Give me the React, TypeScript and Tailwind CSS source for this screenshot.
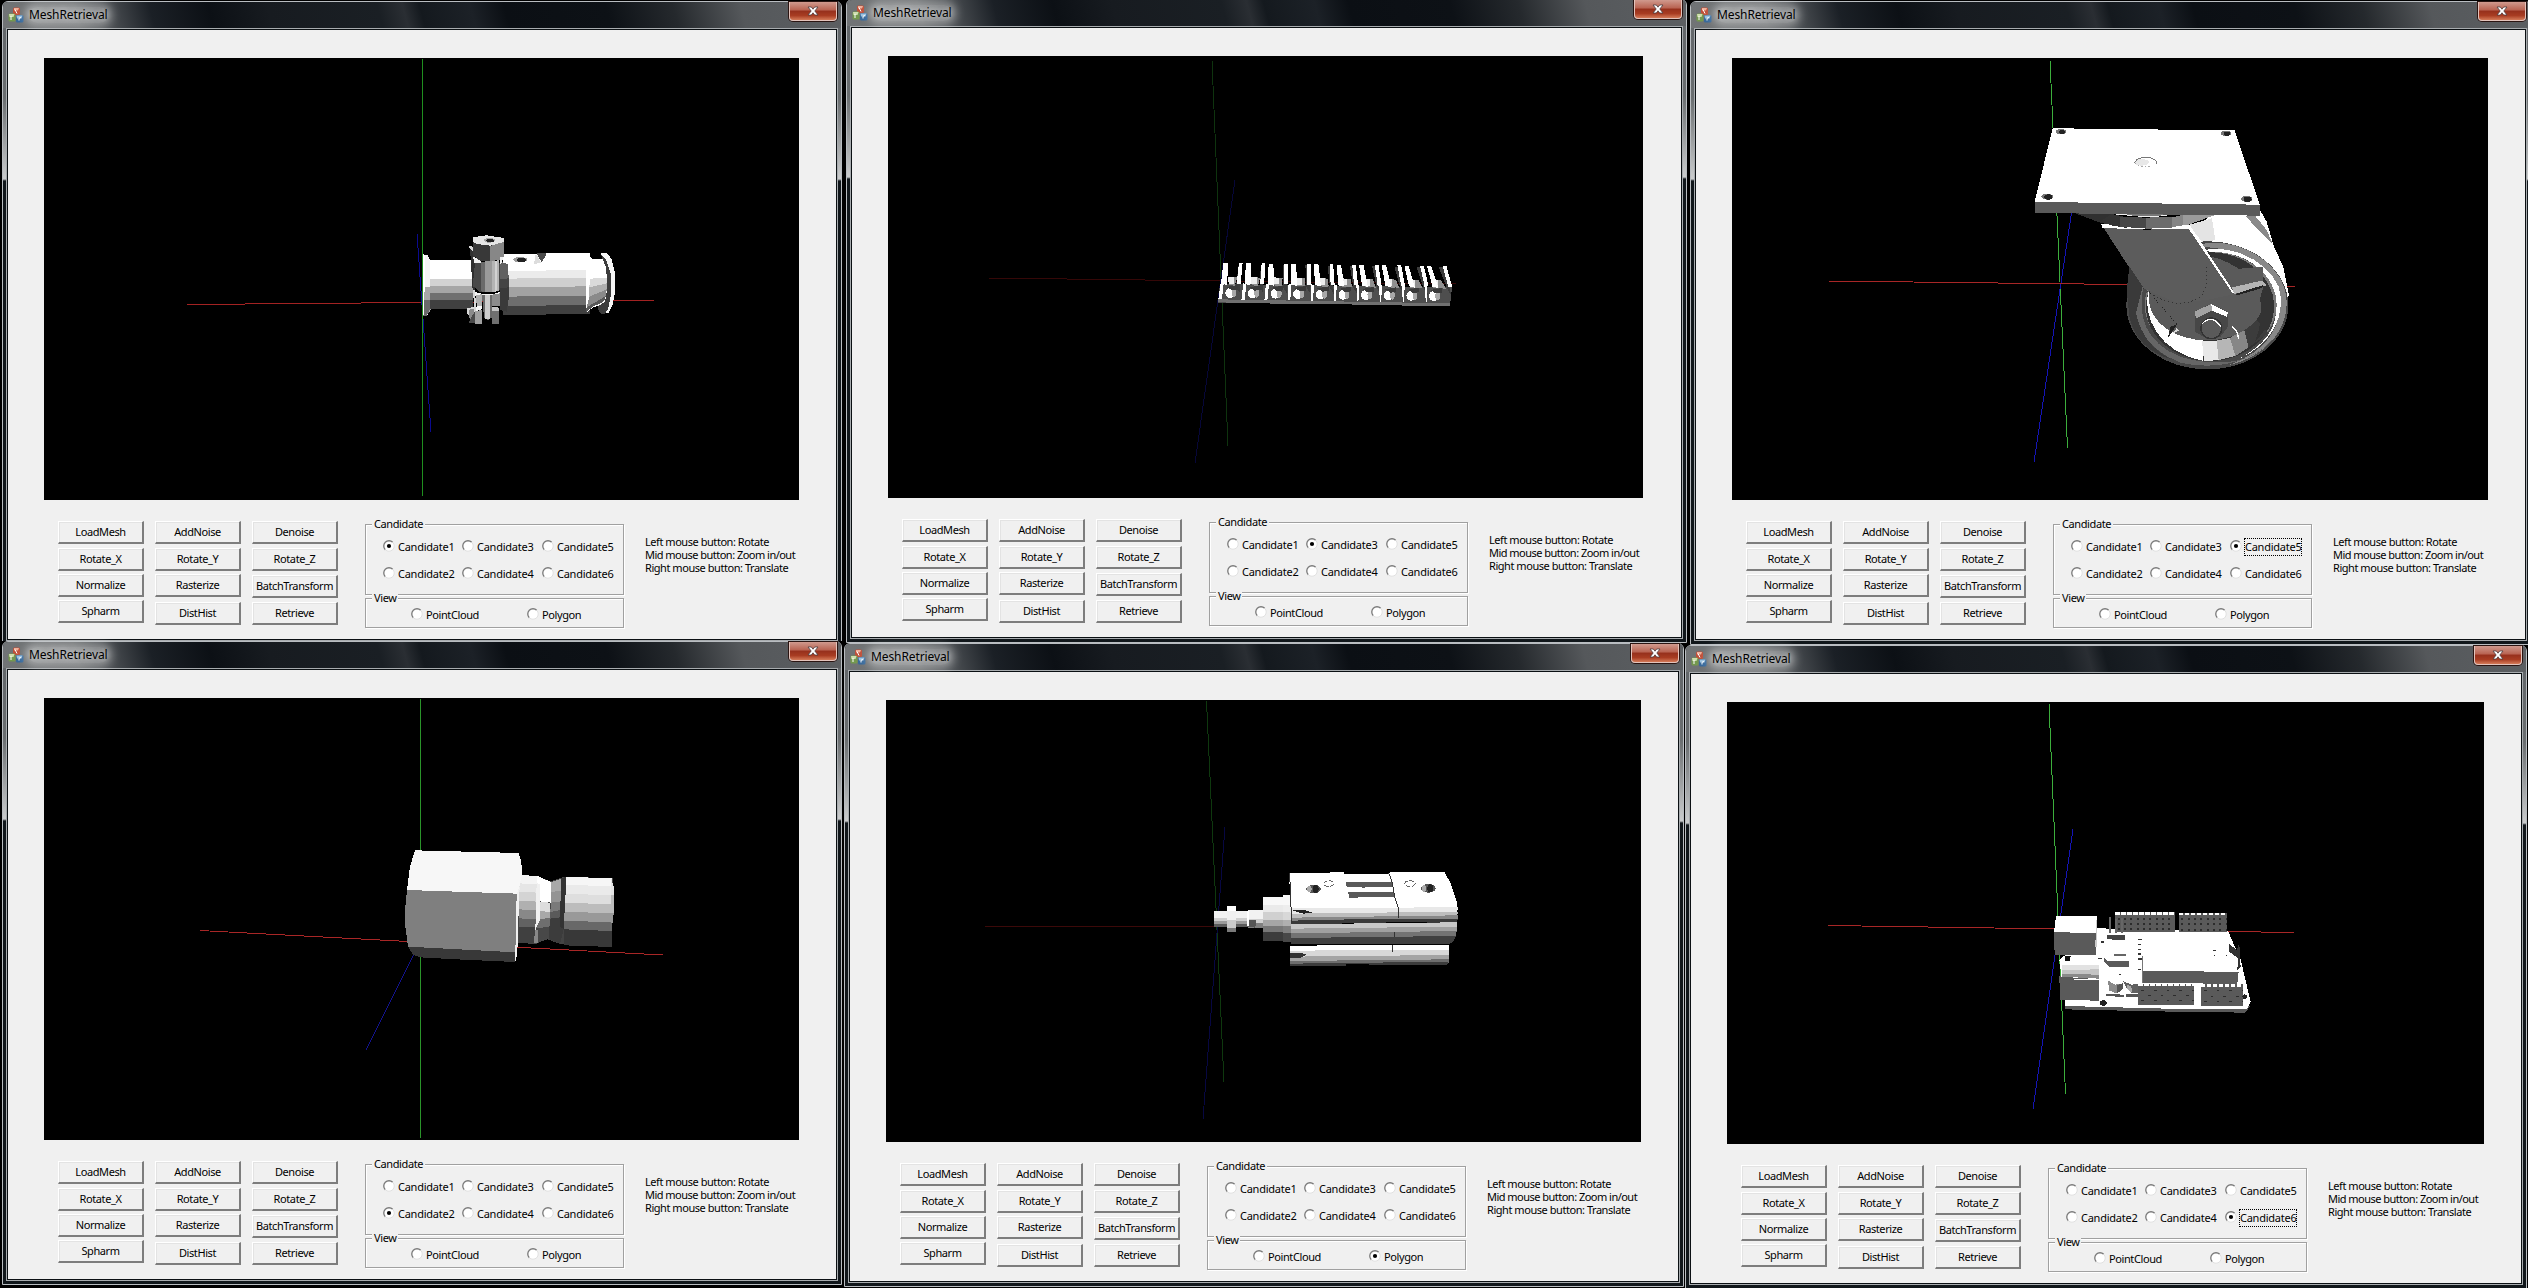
import React from 'react';

type Poly = [string, string];

const Shapes = ({ list }: { list: Poly[] }) => (
  <>
    {list.map(([points, fill], i) => (
      <polygon key={i} points={points} fill={fill} />
    ))}
  </>
);

/** Horizontal shaded strips approximating a faceted cylinder. */
const Bands = ({ x, w, ys, colors, slope = 0 }: { x: number; w: number; ys: number[]; colors: string[]; slope?: number }) => (
  <>
    {colors.map((c, i) => (
      <polygon
        key={i}
        points={`${x},${ys[i]} ${x + w},${ys[i] + slope} ${x + w},${ys[i + 1] + slope} ${x},${ys[i + 1]}`}
        fill={c}
      />
    ))}
  </>
);

const Axis = ({ a, b, color }: { a: [number, number]; b: [number, number]; color: string }) => (
  <line x1={a[0]} y1={a[1]} x2={b[0]} y2={b[1]} stroke={color} strokeWidth={1} />
);

const Coupling = () => (
  <>
    <Axis a={[187, 304.5]} b={[654, 300.5]} color="#a32222" />
    <Axis a={[417, 234]} b={[431, 432]} color="#0a0a90" />
    <g transform="translate(360 200) scale(0.33333)">
      <Shapes
        list={[
          ['190,163 203,165 210,182 216,200 216,310 210,335 200,347 190,347', '#f4f4f4'],
          ['190,262 214,262 212,330 200,347 190,347', '#a8a8a8'],
          ['190,300 212,300 208,335 200,347 190,347', '#6a6a6a'],
        ]}
      />
      <Bands x={210} w={130} ys={[181, 237, 259, 280, 300, 326]} colors={['#ffffff', '#d2d2d2', '#a6a6a6', '#707070', '#404040']} />
      <Shapes list={[['190,163 196,167 192,345 188,345', '#ffffff']]} />
      <Bands x={430} w={260} ys={[162, 213, 236, 262, 290, 318, 345]} colors={['#ffffff', '#ebebeb', '#cfcfcf', '#a2a2a2', '#6e6e6e', '#404040']} slope={-3} />
      <Shapes
        list={[
          ['550,160 670,159 690,172 690,200 550,200', '#ffffff'],
          ['680,165 700,178 735,178 742,210 742,290 730,312 700,322 678,338', '#ffffff'],
          ['690,236 741,233 741,250 688,262', '#dadada'],
          ['688,262 741,250 740,268 688,290', '#b0b0b0'],
          ['688,290 740,268 738,292 680,322', '#8a8a8a'],
          ['680,322 738,288 735,306 700,318 678,338', '#585858'],
          ['722,160 740,158 755,178 765,220 766,270 758,315 745,340 722,341 712,318 735,300 742,260 740,200', '#f6f6f6'],
          ['722,162 738,178 752,220 754,280 745,325 735,342 720,340 712,320 735,305 741,270 739,205', '#3c3c3c'],
          ['530,160 558,160 556,172 544,186', '#4a4a4a'],
          ['527,164 535,172 544,190 522,191', '#dddddd'],
          ['420,185 444,192 447,262 447,290 440,335 420,330', '#3a3a3a'],
          ['420,185 444,192 446,235 420,238', '#606060'],
          ['420,238 446,235 446,262 420,265', '#444444'],
          ['328,138 338,140 345,185 340,200 345,280 350,330 340,370 322,340 322,325 342,320 335,200', '#d8d8d8'],
          ['330,145 345,160 345,270 338,270', '#303030'],
          ['326,330 340,326 345,345 340,370 326,350', '#8a8a8a'],
          ['338,112 380,106 431,114 431,170 390,184 360,184 338,165', '#383838'],
          ['338,112 380,106 431,114 431,126 392,137 350,132 338,124', '#e6e6e6'],
          ['390,138 431,126 431,170 420,180 390,183', '#878787'],
          ['338,168 365,185 365,195 420,188 420,172 431,170 424,192 345,196', '#f0f0f0'],
          ['345,190 420,190 420,270 400,276 360,276 338,258', '#484848'],
          ['364,186 376,186 376,276 364,274', '#6a6a6a'],
          ['376,184 396,184 396,276 376,276', '#9a9a9a'],
          ['396,184 418,180 418,272 396,276', '#b4b4b4'],
          ['404,184 412,183 412,274 404,275', '#d2d2d2'],
          ['345,276 370,282 400,282 420,276 420,290 345,288', '#f4f4f4'],
          ['348,285 366,283 366,318 350,318', '#b0b0b0'],
          ['396,284 420,280 420,318 396,318', '#8c8c8c'],
          ['350,318 366,318 366,328 347,334', '#f6f6f6'],
          ['344,334 366,330 366,371 326,368', '#4a4a4a'],
          ['346,334 366,330 366,371 346,371', '#a0a0a0'],
          ['396,320 414,320 418,330 418,371 396,371', '#c4c4c4'],
          ['396,334 418,334 418,371 396,371', '#707070'],
          ['366,284 396,284 396,352 384,360 372,354', '#6a6a6a'],
          ['376,286 390,286 390,356 376,358', '#cccccc'],
        ]}
      />
      <ellipse cx="388" cy="121" rx="17" ry="7" fill="#aaa" />
      <ellipse cx="391" cy="122" rx="12" ry="5" fill="#222" />
      <ellipse cx="481" cy="179" rx="21" ry="8" fill="#9b9b9b" />
      <ellipse cx="485" cy="180" rx="15" ry="6" fill="#222" />
    </g>
    <Axis a={[422.5, 59]} b={[422.5, 496]} color="#1f8f1f" />
  </>
);

const Terminal = () => (
  <>
    <Axis a={[1212, 61]} b={[1228, 446]} color="#0e330e" />
    <Axis a={[988, 278]} b={[1456, 284]} color="#350707" />
    <Axis a={[1235, 180]} b={[1195, 463]} color="#060638" />
    <g transform="translate(1180 230) scale(0.33333)">
      <Shapes
        list={[
          ['120,162 816,172 810,226 114,218', '#4e4e4e'],
          ['114,208 810,220 810,227 690,227 490,223 290,221 114,217', '#707070'],
        ]}
      />
      {Array.from({ length: 10 }, (_, i) => {
        const x = 130 + 67.9 * i;
        const y = 99 + i;
        const lean = -6 + 2.6 * i;
        return (
          <g key={i}>
            <polygon points={`${x + 15},${y + 41} ${x + 42},${y + 43} ${x + 40 + lean},${y + 68} ${x + 18},${y + 66}`} fill="#8f8f8f" />
            <polygon points={`${x + 14},${y + 41} ${x + 32},${y + 42} ${x + 32},${y + 62} ${x + 16},${y + 62}`} fill="#ededed" />
            <polygon points={`${x + 46 - i * 1.2},${y + 4} ${x + 52},${y + 4} ${x + 56 + lean},${y + 90} ${x + 44 + lean},${y + 70}`} fill="#3c3c3c" />
            <polygon points={`${x},${y} ${x + 15 - i * 0.3},${y} ${x + 17 + lean},${y + 66} ${x - 1 + lean},${y + 62}`} fill="#ffffff" />
            <polygon points={`${x + 47},${y} ${x + 58},${y} ${x + 58 + lean},${y + 62} ${x + 46 + lean},${y + 62}`} fill="#ffffff" />
            <polygon points={`${x - 8},${y + 60} ${x + 1},${y + 62} ${x - 4 + i * 0.3},${y + 109} ${x - 15 + i * 1.3},${y + 109}`} fill="#ffffff" />
            <ellipse cx={x + 20} cy={y + 90} rx="14" ry="15" fill="#ffffff" />
            <ellipse cx={x + 32} cy={y + 89} rx="7" ry="14" fill="#a8a8a8" />
            <polygon points={`${x + 10},${y + 72} ${x + 44},${y + 66} ${x + 44},${y + 80} ${x + 26},${y + 82}`} fill="#3a3a3a" />
          </g>
        );
      })}
    </g>
  </>
);

const Caster = () => (
  <>
    <Axis a={[2050, 61]} b={[2067.5, 448]} color="#3cae3c" />
    <Axis a={[2073, 203]} b={[2034, 462]} color="#1414b4" />
    <Axis a={[1828, 281]} b={[2295, 286.5]} color="#a82626" />
    <g transform="translate(2000 100) scale(0.33333)">
      <Shapes
        list={[
          ['640,342 780,330 800,365 822,440 850,500 866,580 862,650 840,700 700,560 560,400', '#ffffff'],
          ['566,375 636,355 646,420 610,430', '#e4e4e4'],
          ['735,347 765,347 800,390 818,432 790,405', '#8a8a8a'],
        ]}
      />
      <ellipse cx="622" cy="616" rx="243" ry="192" fill="#484848" />
      <path d="M606,432 C700,412 820,470 852,560 C880,640 840,760 680,798 L700,790 C800,750 845,680 838,600 C825,520 760,450 606,440Z" fill="#888" />
      <path d="M612,450 C700,435 800,480 836,560 C860,640 820,730 720,775 C800,730 836,680 828,600 C800,500 740,455 612,454Z" fill="#fff" />
      <path d="M408,560 C380,640 420,740 540,788 C660,815 780,780 830,700 C770,800 640,800 540,770 C440,730 410,650 430,560Z" fill="#666" />
      <ellipse cx="632" cy="615" rx="198" ry="160" fill="#7a7a7a" />
      <ellipse cx="630" cy="620" rx="192" ry="163" fill="#333" />
      <path d="M445,572 C425,650 480,760 610,783 L612,722 C520,700 450,640 445,572Z" fill="#fff" />
      <Shapes
        list={[
          ['606,722 650,722 656,780 612,784', '#e8e8e8'],
          ['650,722 690,714 706,768 656,780', '#b6b6b6'],
          ['690,714 732,688 746,742 706,768', '#878787'],
          ['732,688 765,655 805,700 746,742', '#3c3c3c'],
        ]}
      />
      <ellipse cx="620" cy="596" rx="173" ry="125" fill="#5a5a5a" />
      <path d="M640,470 C740,470 805,530 820,590 C825,640 800,690 765,725 C805,620 790,520 640,470Z" fill="#333" />
      <Shapes
        list={[
          ['440,530 790,500 790,560 770,630 700,700 520,690 460,620', '#5a5a5a'],
          ['696,562 785,542 800,556 702,582', '#b4b4b4'],
          ['706,582 790,555 786,564 712,586', '#222222'],
          ['304,373 440,390 568,376 700,583 620,600 530,608 430,565 386,500', '#5c5c5c'],
          ['304,372 570,376 704,580 696,577 567,388 306,385', '#ffffff'],
          ['220,338 334,340 360,380 300,368', '#303030'],
          ['334,342 382,352 382,384 334,376 300,365', '#333333'],
          ['360,350 440,353 440,386 360,380', '#484848'],
          ['438,353 516,350 516,384 438,386', '#6c6c6c'],
          ['516,352 548,345 548,376 516,382', '#858585'],
          ['548,345 645,345 565,374 548,376', '#9b9b9b'],
          ['330,342 440,352 500,348 500,342', '#eeeeee'],
          ['372,342 500,342 480,347 400,347', '#777777'],
          ['104,306 779,313 779,347 106,339', '#5a5a5a'],
          ['158,84 240,86 704,91 779,314 104,306', '#ffffff'],
          ['584,634 632,612 682,634 684,680 660,712 620,716 584,695', '#474747'],
          ['584,634 634,612 636,632 588,656', '#a2a2a2'],
          ['634,612 684,638 680,650 636,632', '#ffffff'],
          ['504,712 512,680 532,672 514,700', '#222222'],
          ['514,702 530,685 536,692', '#d8d8d8'],
        ]}
      />
      <path d="M388,500 L428,560 L408,640 Q430,740 520,780 Q410,750 388,650 L380,570Z" fill="#3a3a3a" />
      <circle cx="634" cy="685" r="31" fill="#5a5a5a" stroke="#333" strokeWidth="4" />
      <path d="M606,672 Q634,640 662,680 M696,680 Q712,690 716,716" fill="none" stroke="#fff" strokeWidth="4" />
      <path d="M430,565 Q530,640 600,590 Q625,570 620,500" fill="none" stroke="#333" strokeWidth="3" strokeDasharray="4 8" />
      <path d="M450,580 L530,672" fill="none" stroke="#222" strokeWidth="3" strokeDasharray="3 6" />
      {[[183, 95, 15], [678, 100, 15], [142, 290, 18], [740, 297, 18]].map(([x, y, r]) => (
        <g key={x}>
          <ellipse cx={x} cy={y} rx={r} ry={r / 2} fill="#777" />
          <ellipse cx={x + 3} cy={y + 1} rx={r - 6} ry={r / 2 - 1} fill="#222" />
        </g>
      ))}
      <ellipse cx="425" cy="187" rx="22" ry="10" fill="#e8e8e8" />
      <path d="M403,188 Q412,170 445,172 Q475,178 468,192" fill="none" stroke="#777" strokeWidth="3" />
      <path d="M404,190 Q420,204 455,199" fill="none" stroke="#aaa" strokeWidth="3" strokeDasharray="5 6" />
    </g>
  </>
);

const Fitting = () => (
  <>
    <Axis a={[200, 930.5]} b={[663, 955]} color="#a82626" />
    <Axis a={[415, 952]} b={[366, 1050]} color="#12128c" />
    <Axis a={[420.5, 699]} b={[420.5, 1138]} color="#2a942a" />
    <g transform="translate(360 820) scale(0.33333)">
      <Shapes list={[['472,165 532,168 570,184 613,170 758,175 762,260 750,381 600,372 560,357 523,372 472,368', '#444444']]} />
      <Bands x={478} w={54} ys={[165, 190, 215, 242, 268, 295, 320, 368]} colors={['#f4f4f4', '#e6e6e6', '#d4d4d4', '#b0b0b0', '#888888', '#626262', '#404040']} slope={3} />
      <Bands x={612} w={143} ys={[170, 194, 221, 248, 275, 302, 328, 376]} colors={['#f6f6f6', '#eaeaea', '#dedede', '#bcbcbc', '#999999', '#686868', '#383838']} slope={5} />
      <Shapes
        list={[
          ['754,175 761,200 762,226 754,226', '#e4e4e4'],
          ['754,226 762,226 761,280 754,280', '#bcbcbc'],
          ['754,280 761,280 758,308 754,308', '#999999'],
          ['532,168 573,186 573,248 540,244 530,250', '#ffffff'],
          ['530,245 570,248 570,276 528,272', '#dddddd'],
          ['528,272 570,276 570,296 528,298', '#a8a8a8'],
          ['528,298 570,294 570,320 526,325', '#6e6e6e'],
          ['526,325 570,320 566,357 523,372', '#484848'],
          ['524,330 535,330 533,368 523,370', '#888888'],
          ['530,190 540,192 540,300 526,330', '#f0f0f0'],
          ['573,186 606,176 603,212 573,216', '#a8a8a8'],
          ['573,216 603,212 603,244 573,248', '#949494'],
          ['573,248 603,244 602,270 571,276', '#7a7a7a'],
          ['571,276 602,270 602,292 570,296', '#5a5a5a'],
          ['570,296 602,292 612,325 600,372 566,357', '#3c3c3c'],
          ['603,176 617,171 617,215 611,327 600,320', '#333333'],
          ['165,91 400,97 475,99 484,125 486,165 478,200 472,222 141,211 150,140', '#f7f7f7'],
          ['141,210 472,221 474,300 468,397 144,380 136,320 136,260', '#7f7f7f'],
          ['144,380 468,397 466,426 290,418 180,412 160,405', '#383838'],
          ['470,222 479,200 474,330 472,400 466,426 466,400', '#f0f0f0'],
        ]}
      />
    </g>
  </>
);

const Cylinder = () => (
  <>
    <Axis a={[1206.5, 701]} b={[1224, 1082]} color="#0e380e" />
    <Axis a={[985, 927]} b={[1216, 926.5]} color="#3c0909" />
    <Axis a={[1225, 827]} b={[1203, 1119]} color="#070742" />
    <g transform="translate(1180 840) scale(0.33333)">
      <Bands x={103} w={102} ys={[213, 234, 244, 252, 260]} colors={['#f2f2f2', '#cfcfcf', '#9a9a9a', '#5c5c5c']} />
      <Bands x={141} w={26} ys={[198, 214, 240, 264, 277]} colors={['#ffffff', '#f0f0f0', '#cacaca', '#7a7a7a']} />
      <Bands x={204} w={45} ys={[210, 236, 248, 263]} colors={['#f2f2f2', '#d0d0d0', '#808080']} />
      <Shapes list={[['204,240 228,240 226,263 204,261', '#555555'], ['200,213 207,213 207,258 200,258', '#ffffff']]} />
      <Bands x={249} w={84} ys={[171, 194, 217, 240, 259, 277, 303]} colors={['#f8f8f8', '#eaeaea', '#d0d0d0', '#a6a6a6', '#777777', '#3c3c3c']} />
      <Bands x={308} w={26} ys={[165, 194, 217, 240, 259, 279, 306]} colors={['#f8f8f8', '#ededed', '#d8d8d8', '#b0b0b0', '#808080', '#484848']} />
      <Shapes
        list={[
          ['328,99 492,97 492,101 626,101 630,96 794,97 812,130 832,190 833,210 330,214', '#ffffff'],
          ['330,204 833,202 832,216 332,222', '#e8e8e8'],
          ['332,221 833,215 832,228 333,234', '#bdbdbd'],
          ['333,233 833,226 833,238 333,244', '#888888'],
          ['333,242 610,236 833,236 831,248 640,247 333,254', '#3a3a3a'],
          ['333,253 640,249 831,247 831,262 333,268', '#c8c8c8'],
          ['333,266 831,260 830,275 333,281', '#a0a0a0'],
          ['333,280 830,273 826,290 333,295', '#737373'],
          ['333,294 828,288 820,305 806,312 333,313', '#404040'],
          ['330,318 500,315 640,315 806,315 806,336 330,340', '#ffffff'],
          ['330,332 806,329 806,348 330,352', '#d8d8d8'],
          ['330,350 806,345 806,360 500,362 330,366', '#a4a4a4'],
          ['330,364 500,361 806,358 806,368 500,373 330,373', '#6e6e6e'],
          ['330,371 498,369 806,365 800,375 630,375 498,372 498,378 330,378', '#3c3c3c'],
          ['330,338 362,338 380,344 362,353 330,353', '#333333'],
          ['333,210 375,210 396,218 370,221', '#222222'],
          ['498,126 638,126 638,140 554,140 554,143 500,140', '#5a5a5a'],
          ['504,156 642,156 645,171 535,171 535,174 508,173', '#5a5a5a'],
        ]}
      />
      <path d="M626,98 L636,125 L644,170 L656,208 L655,235 M643,275 V290 M637,315 V335 M329,100 L335,250" fill="none" stroke="#333" strokeWidth="3" />
      {[[401, 147], [745, 145]].map(([x, y]) => (
        <g key={x}>
          <ellipse cx={x} cy={y} rx="22" ry="13" fill="#555" />
          <ellipse cx={x + 6} cy={y} rx="9" ry="12" fill="#222" />
          <ellipse cx={x - 13} cy={y} rx="7" ry="10" fill="#aaa" />
        </g>
      ))}
      <ellipse cx="446" cy="131" rx="15" ry="9" fill="none" stroke="#666" strokeWidth="3" strokeDasharray="14 5" />
      <ellipse cx="690" cy="131" rx="16" ry="9" fill="none" stroke="#666" strokeWidth="3" strokeDasharray="14 5" />
    </g>
  </>
);

const Header = ({ x, y, w, h, holes }: { x: number; y: number; w: number; h: number; holes: boolean }) => (
  <>
    <rect x={x} y={y} width={w} height={h} fill="#5a5a5a" />
    <path d={`M${x},${y + 3} H${x + w}`} stroke="#fff" strokeWidth="8" strokeDasharray="14 4" />
    {holes ? (
      <path
        d={`M${x + 8},${y + 19} H${x + w} M${x + 8},${y + 34} H${x + w} M${x + 8},${y + 50} H${x + w}`}
        stroke="#2c2c2c"
        strokeWidth="6"
        strokeDasharray="6 13"
      />
    ) : (
      <path
        d={`M${x + 10},${y + 20} H${x + w} M${x + 30},${y + 36} H${x + w} M${x + 10},${y + 52} H${x + w}`}
        stroke="#2c2c2c"
        strokeWidth="3"
        strokeDasharray="8 30"
      />
    )}
  </>
);

const Board = () => (
  <>
    <Axis a={[2049, 704]} b={[2065.5, 1094]} color="#3cae3c" />
    <Axis a={[2073, 829]} b={[2033, 1109]} color="#1414b4" />
    <Axis a={[1828, 925.5]} b={[2294, 932.5]} color="#a82626" />
    <g transform="translate(2020 880) scale(0.33333)">
      <Shapes
        list={[
          ['134,378 690,378 676,398 400,394 134,388', '#5a5a5a'],
          ['230,145 624,152 640,190 660,230 692,366 680,388 440,386 136,378 118,240', '#ffffff'],
          ['134,228 152,228 150,243 134,243', '#111111'],
          ['102,155 228,158 228,224 104,224', '#5a5a5a'],
          ['108,107 231,109 229,160 102,156', '#ffffff'],
          ['228,120 232,120 230,200 226,200', '#cccccc'],
          ['118,288 238,296 238,362 120,360', '#5a5a5a'],
          ['124,244 238,246 238,298 124,290', '#ffffff'],
          ['126,256 238,256 238,270 126,270', '#e2e2e2'],
          ['126,270 238,268 238,284 126,282', '#c4c4c4'],
          ['126,282 238,284 238,296 126,290', '#8a8a8a'],
          ['252,232 262,242 328,242 328,260 266,260 252,246', '#5a5a5a'],
          ['282,222 318,222 318,228 282,228', '#666666'],
          ['262,164 314,164 314,180 262,178', '#444444'],
          ['368,272 656,276 652,312 368,308', '#5a5a5a'],
          ['366,228 369,228 369,308 366,308', '#777777'],
          ['264,302 286,314 308,310 308,328 290,340 268,332', '#8a8a8a'],
          ['290,316 308,310 308,328 292,340', '#555555'],
          ['310,304 334,314 354,312 354,340 336,340 320,326', '#606060'],
          ['320,314 334,320 336,338 322,328', '#aaaaaa'],
          ['260,342 312,344 312,351 258,348', '#555555'],
          ['318,343 354,343 354,350 318,350', '#555555'],
          ['626,190 650,210 658,190 662,262 652,270 654,235 628,215', '#333333'],
        ]}
      />
      <Header x={285} y={97} w={180} h={60} holes />
      <Header x={476} y={99} w={146} h={58} holes />
      <Header x={354} y={311} w={168} h={65} holes={false} />
      <Header x={542} y={313} w={128} h={65} holes={false} />
      <ellipse cx="250" cy="369" rx="11" ry="8" fill="#222" />
      <ellipse cx="674" cy="350" rx="7" ry="7" fill="#222" />
      <path
        d="M270,112 V158 M288,116 V160 M306,114 V160"
        stroke="#666"
        strokeWidth="5"
      />
      <path
        d="M354,178 h12 M354,193 h10 M354,208 h10 M354,222 h10 M354,237 h12 M354,268 h10 M234,236 h12 M580,212 h8 M244,186 h8 M296,283 h8 M582,226 h4 M618,226 h4"
        stroke="#333"
        strokeWidth="4"
      />
      <path d="M162,299 H238" stroke="#fff" strokeWidth="3" />
    </g>
  </>
);

const AppIcon = () => (
  <svg viewBox="0 0 16 16" className="h-4 w-4 shrink-0">
    <rect x="5" y="0.5" width="7" height="7.5" rx="1.5" fill="#c0503a" />
    <path d="M6 1 h5 l-1 2.5 h-4z" fill="#f0b09a" />
    <rect x="0.5" y="6.5" width="7" height="8" rx="1.5" fill="#74994f" />
    <path d="M1 7 h5.5 l-1 3 h-4z" fill="#cfdfae" />
    <rect x="8" y="8" width="7.5" height="7.5" rx="1.5" fill="#37699b" />
    <path d="M8.5 8.5 h6 l-1 3 h-4.5z" fill="#9cc3e0" />
    <path d="M7 2.5 l2 4 M3 9 v4 M13 10.5 q-3 0 -2 3" stroke="#fff" strokeWidth="1" fill="none" />
  </svg>
);

const CloseButton = () => (
  <div className="flex h-[19px] w-[48px] items-center justify-center rounded-b-[4px] border border-t-0 border-[#e3c3bb] bg-[linear-gradient(180deg,#d09a8e_0%,#b86250_45%,#96301c_50%,#a83c22_75%,#d47a58_100%)] shadow-[0_0_0_1px_#2b1512]">
    <svg viewBox="0 0 12 10" className="h-[10px] w-3">
      <path d="M1 1 H4.3 L6 3.2 L7.7 1 H11 L7.8 5 L11 9 H7.7 L6 6.8 L4.3 9 H1 L4.2 5 Z" fill="#fff" stroke="#4a3a3c" strokeWidth="0.8" />
    </svg>
  </div>
);

const PushButton = ({ label }: { label: string }) => (
  <button className="flex h-[23px] w-[86px] items-center justify-center whitespace-nowrap border-t border-r-2 border-b-2 border-l border-t-white border-r-[#7d7d7d] border-b-[#7d7d7d] border-l-white bg-[#f0f0f0] p-0 pb-[2px] shadow-[inset_1px_1px_0_#e3e3e3]">
    {label}
  </button>
);

const Radio = ({ label, on = false, focus = false }: { label: string; on?: boolean; focus?: boolean }) => (
  <label className="flex h-4 items-center gap-[3px]">
    <svg viewBox="0 0 12 12" className="mb-[2px] h-3 w-3 shrink-0">
      <circle cx="6" cy="6" r="5.2" fill="#fff" />
      <path d="M9.7 2.3 A5.2 5.2 0 0 0 2.3 9.7" fill="none" stroke="#7a7a7a" strokeWidth="1.3" />
      <path d="M9.7 2.3 A5.2 5.2 0 0 1 2.3 9.7" fill="none" stroke="#e0e0e0" strokeWidth="1" />
      {on && <circle cx="6" cy="6" r="2.1" fill="#000" />}
    </svg>
    <span className={focus ? 'h-4 whitespace-nowrap leading-[15px] outline outline-1 outline-dotted outline-black' : 'h-4 whitespace-nowrap leading-[15px]'}>
      {label}
    </span>
  </label>
);

const GroupBox = ({ title, className, children }: { title: string; className: string; children: React.ReactNode }) => (
  <div className={`relative w-[259px] border border-[#a0a0a0] shadow-[1px_1px_0_#fff,inset_1px_1px_0_#fff] ${className}`}>
    <span className="absolute -top-2 left-[6px] bg-[#f0f0f0] px-[2px] leading-[14px]">{title}</span>
    {children}
  </div>
);

const buttonColumns = [
  { labels: ['LoadMesh', 'Rotate_X', 'Normalize', 'Spharm'], gaps: ['', 'mt-1', 'mt-[3px]', 'mt-[3px]'] },
  { labels: ['AddNoise', 'Rotate_Y', 'Rasterize', 'DistHist'], gaps: ['', 'mt-1', 'mt-[3px]', 'mt-[5px]'] },
  { labels: ['Denoise', 'Rotate_Z', 'BatchTransform', 'Retrieve'], gaps: ['', 'mt-1', 'mt-1', 'mt-1'] },
];

interface WindowProps {
  model: React.ReactNode;
  viewBox: string;
  className: string;
  viewport?: string;
  selected: string;
  focused?: string;
}

const MeshWindow = ({ model, viewBox, className, viewport = 'w-[755px]', selected, focused }: WindowProps) => {
  const radio = (name: string) => <Radio label={name} on={selected === name} focus={focused === name} />;
  return (
    <section className={`h-[644px] shrink-0 rounded-t-[6px] border border-[#b9bdc1] bg-[#14191d] ${className}`}>
      <header className="flex h-[26px] justify-between rounded-t-[5px] bg-[linear-gradient(75deg,#717476_0%,#6b6e70_9%,#4a4e52_13%,#1b2026_18%,#0c1015_25%,#171b20_32%,#1a1f24_45%,#2a2e33_48%,#14191e_50%,#1c2127_56%,#0b0f14_60%,#0d1116_72%,#25292d_80%,#55585b_88%,#5c5f62_100%)] pl-[5px]">
        <div className="flex items-center">
          <AppIcon />
          <span className="ml-[5px] rounded-full bg-white/30 font-['Noto_Sans',sans-serif] text-[12px] leading-[16px] tracking-[-0.1px] text-black shadow-[0_0_8px_5px_rgba(255,255,255,0.3)] [text-shadow:0_0_6px_#fff]">
            MeshRetrieval
          </span>
        </div>
        <div className="mr-[4px]">
          <CloseButton />
        </div>
      </header>
      <div className="bg-[linear-gradient(180deg,#63676a_0px,#6a6e70_70px,#c9cbcc_150px,#c9cbcc_151px,#11171b_153px,#11171b_100%)] px-[3px] pb-[3px]">
        <div className="border border-[#a8acaf]">
          <div className="h-[611px] border border-[#0b1013] bg-[#f0f0f0] pt-7 pl-9">
            <div className={`h-[442px] bg-black ${viewport}`}>
              <svg viewBox={viewBox} className="block h-full w-full" shapeRendering="crispEdges">
                {model}
              </svg>
            </div>
            <div className="flex pt-[21px] pl-[14px] font-['Noto_Sans',sans-serif] text-[11px] leading-[13px] tracking-[-0.4px] text-black">
              <div className="flex gap-[11px]">
                {buttonColumns.map((col) => (
                  <div key={col.labels[0]} className="flex flex-col">
                    {col.labels.map((label, i) => (
                      <div key={label} className={col.gaps[i]}>
                        <PushButton label={label} />
                      </div>
                    ))}
                  </div>
                ))}
              </div>
              <div className="ml-[27px] mt-[3px] flex flex-col gap-[3px]">
                <GroupBox title="Candidate" className="h-[71px]">
                  <div className="grid grid-cols-[79px_80px_80px] gap-y-[11px] pt-[14px] pl-[17px] tracking-[-0.25px]">
                    {radio('Candidate1')}
                    {radio('Candidate3')}
                    {radio('Candidate5')}
                    {radio('Candidate2')}
                    {radio('Candidate4')}
                    {radio('Candidate6')}
                  </div>
                </GroupBox>
                <GroupBox title="View" className="h-[30px]">
                  <div className="grid grid-cols-[116px_80px] pt-2 pl-[45px]">
                    {radio('PointCloud')}
                    {radio('Polygon')}
                  </div>
                </GroupBox>
              </div>
              <div className="mt-[14px] ml-[21px] whitespace-nowrap tracking-[-0.45px]">
                <p>Left mouse button: Rotate</p>
                <p className="tracking-[-0.52px]">Mid mouse button: Zoom in/out</p>
                <p>Right mouse button: Translate</p>
              </div>
            </div>
          </div>
        </div>
      </div>
    </section>
  );
};

export default function App() {
  return (
    <main className="flex h-[1288px] w-[2528px] overflow-hidden bg-black">
      <div className="flex w-[843px] shrink-0 flex-col">
        <div className="h-[641px] shrink-0 overflow-hidden pt-px">
          <MeshWindow className="ml-[2px] w-[840px]" viewBox="44 58 755 442" model={<Coupling />} selected="Candidate1" />
        </div>
        <MeshWindow className="ml-[2px] w-[840px]" viewBox="44 698 755 442" model={<Fitting />} selected="Candidate2" />
      </div>
      <div className="flex w-[842px] shrink-0 flex-col">
        <MeshWindow className="-mt-px ml-[3px] w-[841px]" viewBox="888 56 755 442" model={<Terminal />} selected="Candidate3" />
        <MeshWindow className="ml-px w-[840px]" viewBox="886 700 755 442" model={<Cylinder />} selected="Polygon" />
      </div>
      <div className="flex w-[843px] shrink-0 flex-col">
        <MeshWindow className="mt-px ml-[5px] w-[841px]" viewport="w-[756px]" viewBox="1732 58 756 442" model={<Caster />} selected="Candidate5" focused="Candidate5" />
        <MeshWindow className="w-[842px]" viewport="w-[757px]" viewBox="1727 702 757 442" model={<Board />} selected="Candidate6" focused="Candidate6" />
      </div>
    </main>
  );
}
